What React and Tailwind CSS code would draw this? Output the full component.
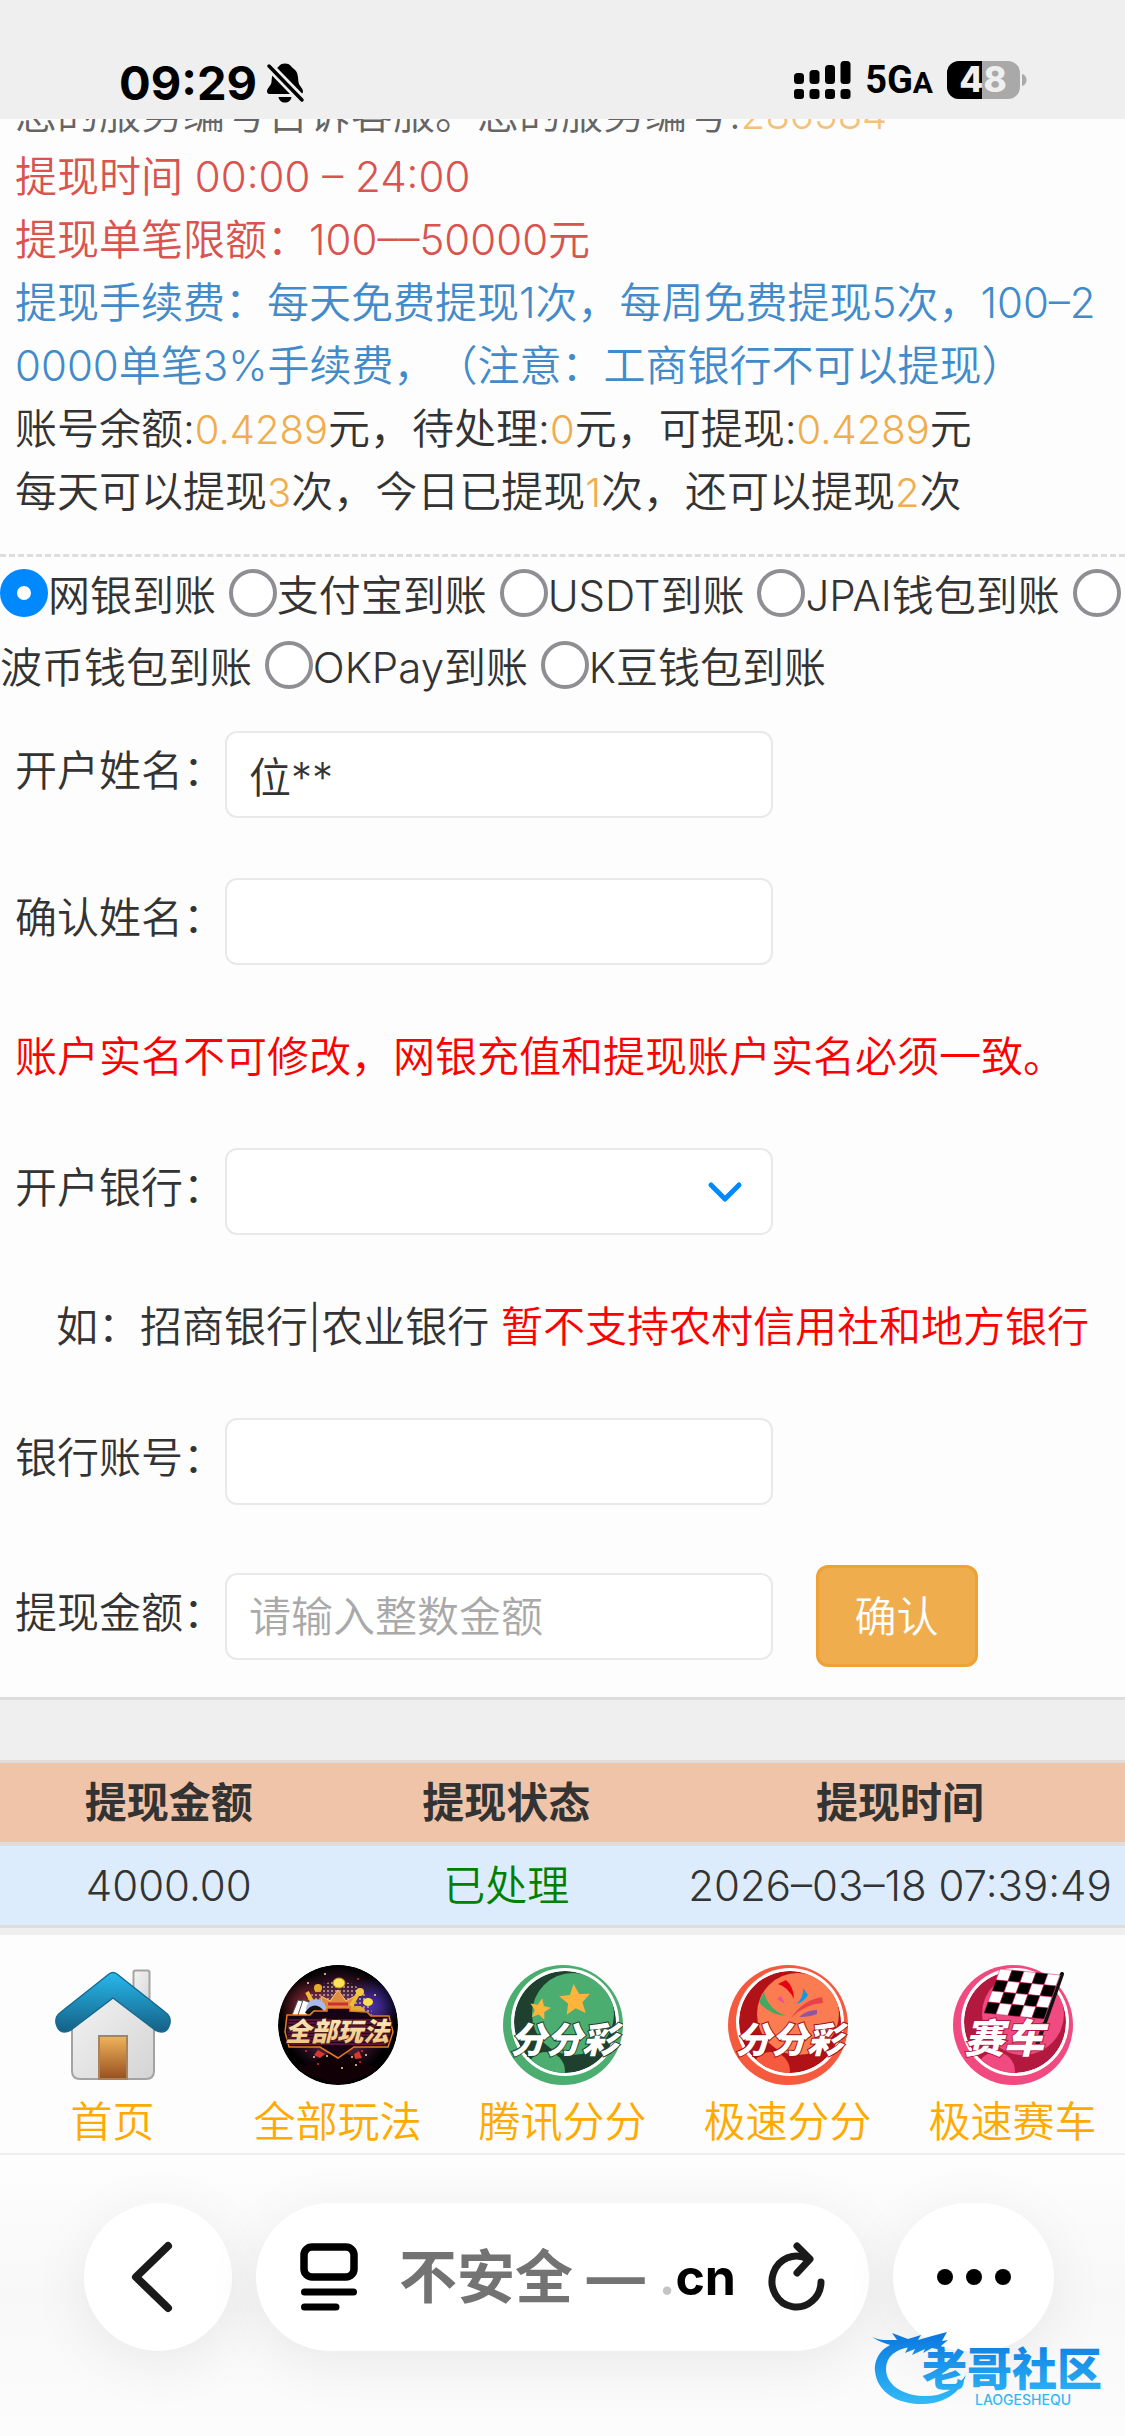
import React from "react";

const labelStyle = "shrink-0 w-[210px] pb-2";
const fieldStyle =
  "h-[87px] w-full rounded-xl border-2 border-[#e9e9e9] bg-white px-[22px] text-[#333] outline-none placeholder:text-[#a9a9a9]";

function BellOff() {
  return (
    <svg width="40" height="42" viewBox="0 0 40 42" role="img" aria-label="静音">
      <path d="M11 7C14 5 14.500 1.500 20 1.500C25.500 1.500 26 5 29 7C33 10 33 15 33.500 20C34 24 38 26 38 29.500C38 31 37 32 35.500 32H4.500C3 32 2 31 2 29.500C2 26 6 24 6.500 20C7 15 7 10 11 7Z" />
      <path d="M13.500 35H26.500C26 38.500 23.500 40.500 20 40.500C16.500 40.500 14 38.500 13.500 35Z" />
      <path d="M3 3L38 39" stroke="#efefef" strokeWidth="9" />
      <path d="M4 4L37 38" stroke="#000" strokeWidth="3.500" strokeLinecap="round" />
    </svg>
  );
}

function Signal() {
  return (
    <svg width="57" height="38" viewBox="0 0 57 38" role="img" aria-label="信号">
      <rect x="0" y="12" width="10" height="11" rx="3.500" />
      <rect x="15.500" y="9" width="10" height="14" rx="3.500" />
      <rect x="31" y="4" width="10" height="19" rx="3.500" />
      <rect x="46.500" y="0" width="10" height="23" rx="3.500" />
      <rect x="0" y="28" width="10" height="10" rx="3" />
      <rect x="15.500" y="28" width="10" height="10" rx="3" />
      <rect x="31" y="28" width="10" height="10" rx="3" />
      <rect x="46.500" y="28" width="10" height="10" rx="3" />
    </svg>
  );
}

function Battery() {
  return (
    <svg width="81" height="38" viewBox="0 0 81 38" role="img" aria-label="电量 48">
      <defs>
        <clipPath id="cell"><rect width="73" height="38" rx="12" /></clipPath>
      </defs>
      <g clipPath="url(#cell)">
        <rect width="73" height="38" fill="#a9a9a9" />
        <rect width="35" height="38" fill="#000" />
      </g>
      <path d="M75 13C81 14 81 24 75 25Z" fill="#a9a9a9" />
      <text x="36" y="31" textAnchor="middle" fontSize="35" fontWeight="800" fill="#efefef" fontFamily="Inter, sans-serif">48</text>
    </svg>
  );
}

function StatusBar() {
  return (
    <header className="flex h-[119px] shrink-0 items-end justify-between bg-[#efefef] pb-[15px] pl-[119px] pr-[97px] text-black">
      <div className="flex items-center gap-2">
        <time className="text-[47px] leading-[42px] font-bold">09:29</time>
        <BellOff />
      </div>
      <div className="flex items-center gap-3.5">
        <Signal />
        <span className="pt-1 font-[Roboto,sans-serif] text-[38px] leading-[42px] font-bold">
          5G<span className="text-[30px]">A</span>
        </span>
        <Battery />
      </div>
    </header>
  );
}

function Num({ children }) {
  return <span className="text-[40px] leading-none text-[#f0ad4e]">{children}</span>;
}

function Notice() {
  return (
    <section className="border-b-[3px] border-dashed border-[#ddd] px-[15px] pb-[31px] break-all">
      <div className="flex h-[26px] flex-col justify-end overflow-hidden opacity-75">
        <p>您的服务编号告诉客服。您的服务编号:<Num>286584</Num></p>
      </div>
      <p className="text-[#d9534f]">提现时间 00:00 – 24:00</p>
      <p className="text-[#d9534f]">提现单笔限额：100––50000元</p>
      <p className="text-[#428bca]">
        提现手续费：每天免费提现1次，每周免费提现5次，100–20000单笔3%手续费，（注意：工商银行不可以提现）
      </p>
      <p>账号余额:<Num>0.4289</Num>元，待处理:<Num>0</Num>元，可提现:<Num>0.4289</Num>元</p>
      <p>每天可以提现<Num>3</Num>次，今日已提现<Num>1</Num>次，还可以提现<Num>2</Num>次</p>
    </section>
  );
}

const channels = ["网银到账", "支付宝到账", "USDT到账", "JPAI钱包到账", "波币钱包到账", "OKPay到账", "K豆钱包到账"];

function Channels() {
  return (
    <div className="break-all pt-[3px] leading-[72px]">
      {channels.map((name, i) => (
        <React.Fragment key={name}>
          <label className="mr-px">
            <input
              type="radio"
              name="channel"
              defaultChecked={i === 0}
              className="size-12 appearance-none rounded-full border-4 border-[#8e8e93] bg-white align-[-6px] checked:border-[17px] checked:border-[#0088ff]"
            />
            {name}
          </label>{" "}
        </React.Fragment>
      ))}
    </div>
  );
}

function Field({ id, label, children, action }) {
  return (
    <div className="flex items-center px-[15px]">
      <label htmlFor={id} className={labelStyle}>{label}</label>
      <div className="relative w-1/2">{children}</div>
      {action}
    </div>
  );
}

function WithdrawForm() {
  return (
    <form className="border-b-[3px] border-[#ddd] pb-[30px]" onSubmit={(e) => e.preventDefault()}>
      <Channels />
      <div className="flex flex-col gap-[60px] pt-[27px]">
        <Field id="holder" label="开户姓名：">
          <input id="holder" type="text" defaultValue="位**" className={fieldStyle} />
        </Field>
        <Field id="confirm" label="确认姓名：">
          <input id="confirm" type="text" className={fieldStyle} />
        </Field>
        <p className="px-[15px] text-[#ff0000]">账户实名不可修改，网银充值和提现账户实名必须一致。</p>
        <Field id="bank" label="开户银行：">
          <select id="bank" defaultValue="" className={fieldStyle + " appearance-none"}>
            <option value=""></option>
            <option>招商银行</option>
            <option>农业银行</option>
          </select>
          <svg className="pointer-events-none absolute right-7 top-8" width="38" height="26" viewBox="0 0 38 26" fill="none" stroke="#0088ff" strokeWidth="5" strokeLinecap="round" strokeLinejoin="round">
            <path d="M4 5L18 19L32 5" />
          </svg>
        </Field>
        <p className="pl-14">
          如：招商银行|农业银行 <span className="text-[#ff0000]">暂不支持农村信用社和地方银行</span>
        </p>
        <Field id="account" label="银行账号：">
          <input id="account" type="text" className={fieldStyle} />
        </Field>
        <Field
          id="amount"
          label="提现金额："
          action={
            <button type="submit" className="ml-[43px] h-[102px] w-[162px] rounded-xl border-[3px] border-[#eea236] bg-[#f0ad4e] text-white">
              确认
            </button>
          }
        >
          <input id="amount" type="text" placeholder="请输入整数金额" className={fieldStyle} />
        </Field>
      </div>
    </form>
  );
}

function Records() {
  const head = "h-[86px] border-t-[3px] border-b-4 border-[#ddd] p-0 font-bold";
  const cell = "h-[82px] border-b-[3px] border-[#ddd] p-0";
  return (
    <div className="bg-[#efefef] pt-[60px] pb-[7px]">
      <table className="w-full table-fixed border-separate border-spacing-0 text-center">
        <colgroup>
          <col className="w-[30%]" />
          <col className="w-[30%]" />
          <col className="w-[40%]" />
        </colgroup>
        <thead className="bg-[#f0c4a8]">
          <tr>
            <th className={head}>提现金额</th>
            <th className={head}>提现状态</th>
            <th className={head}>提现时间</th>
          </tr>
        </thead>
        <tbody className="bg-[#dcecfd]">
          <tr>
            <td className={cell}>4000.00</td>
            <td className={cell + " text-[#008000]"}>已处理</td>
            <td className={cell}>2026–03–18 07:39:49</td>
          </tr>
        </tbody>
      </table>
    </div>
  );
}

const heavy = { fontFamily: "'Noto Sans CJK SC', sans-serif", fontWeight: 900, fontStyle: "italic" };

function HouseIcon() {
  return (
    <svg width="120" height="120" viewBox="0 0 120 120" aria-hidden="true">
      <defs>
        <linearGradient id="roof" x1="0" y1="8" x2="0" y2="68" gradientUnits="userSpaceOnUse">
          <stop offset="0" stopColor="#27b9ec" /><stop offset="1" stopColor="#155f83" />
        </linearGradient>
        <linearGradient id="door" x1="0" y1="0" x2="0" y2="1">
          <stop offset="0" stopColor="#f0b45c" /><stop offset="1" stopColor="#96501f" />
        </linearGradient>
        <linearGradient id="wall" x1="0" y1="0" x2="1" y2="1">
          <stop offset="0" stopColor="#f4f4f4" /><stop offset="1" stopColor="#d4d4d4" />
        </linearGradient>
      </defs>
      <rect x="80.500" y="5.500" width="16" height="42" rx="2" fill="url(#wall)" stroke="#a3a3a3" strokeWidth="2" />
      <path d="M19 56L60 24L101 56V106Q101 114 93 114H27Q19 114 19 106Z" fill="url(#wall)" stroke="#a3a3a3" strokeWidth="2" />
      <rect x="46" y="71" width="28" height="43" fill="url(#door)" stroke="#a8845c" strokeWidth="2" />
      <path d="M8 47L56 9Q60 6 64 9L112 47Q118 51 117 58Q114 71 102 65L60 33L18 65Q6 71 3 58Q2 51 8 47Z" fill="url(#roof)" stroke="#176a90" strokeWidth="1.500" strokeLinejoin="round" />
    </svg>
  );
}

function AllGamesIcon() {
  const dots = [[28, 86], [36, 92], [74, 92], [84, 86], [78, 100], [64, 103], [40, 99], [88, 90], [49, 91], [82, 97], [30, 18], [47, 9], [80, 14], [97, 30]];
  return (
    <svg width="120" height="120" viewBox="0 0 120 120" aria-hidden="true">
      <defs>
        <clipPath id="disc"><circle cx="60" cy="60" r="60" /></clipPath>
        <radialGradient id="glow" cx=".5" cy=".48" r=".5">
          <stop offset="0" stopColor="#d09aa4" /><stop offset=".4" stopColor="#65344f" /><stop offset=".7" stopColor="#2b0f22" /><stop offset=".95" stopColor="#000" />
        </radialGradient>
        <radialGradient id="left"><stop offset="0" stopColor="#a8323a" stopOpacity=".7" /><stop offset="1" stopColor="#a8323a" stopOpacity="0" /></radialGradient>
        <radialGradient id="right"><stop offset="0" stopColor="#4a36c8" stopOpacity=".8" /><stop offset="1" stopColor="#4a36c8" stopOpacity="0" /></radialGradient>
        <linearGradient id="gold" x1="0" y1="0" x2="0" y2="1"><stop offset="0" stopColor="#fff4d2" /><stop offset="1" stopColor="#eebe78" /></linearGradient>
        <pattern id="mesh" width="4" height="4" patternUnits="userSpaceOnUse"><circle cx="2" cy="2" r="1" fill="#f7d5c4" opacity=".7" /></pattern>
        <pattern id="lines" width="4" height="3" patternUnits="userSpaceOnUse"><path d="M0 1H4" stroke="#9b1e75" strokeWidth="1" /></pattern>
      </defs>
      <g clipPath="url(#disc)">
        <circle cx="60" cy="60" r="60" fill="#000" />
        <circle cx="60" cy="58" r="58" fill="url(#glow)" />
        <circle cx="27" cy="40" r="28" fill="url(#left)" />
        <circle cx="95" cy="40" r="28" fill="url(#right)" />
        <circle cx="60" cy="50" r="34" fill="url(#mesh)" />
        <path d="M17 105L60 84L101 105L60 120Z" fill="#110006" />
        <path d="M44 43L43 31L52 36L60 25L68 36L77 31L75 43Z" fill="#e08b42" stroke="#ffc973" />
        <path d="M50 39H70" stroke="#d02d32" strokeWidth="3" />
        <path d="M29 27L37 42M81 27L73 41" stroke="#f2bb36" strokeWidth="4" />
        <ellipse cx="61" cy="18" rx="6" ry="5" fill="#ffe45a" stroke="#c98716" />
        <circle cx="40" cy="23" r="4" fill="#e6ad2c" /><circle cx="82" cy="27" r="4" fill="#f5c93f" />
        <ellipse cx="90" cy="37" rx="5" ry="4" fill="#ffe04c" /><ellipse cx="79" cy="45" rx="8" ry="4" fill="#e6ad2c" />
        <path d="M14 50L20 35L28 37L24 52Z" fill="#fff" stroke="#555" />
        <path d="M20 50L25 35L33 38L29 52Z" fill="#fff" stroke="#555" />
        <circle cx="38" cy="44" r="10" fill="#a9b9e9" /><path d="M29 49Q37 37 45 49" fill="none" stroke="#111" strokeWidth="5" />
        <path d="M9 50L32 50L36 46L49 46V43H72V46L89 47L93 51H111L115 67L110 82H76L60 93L42 82H11L7 67Z" fill="#170311" stroke="#e67b20" strokeWidth="1.500" />
        <path d="M11 53H109L113 67L108 80H12L9 67Z" fill="url(#lines)" />
        <text x="59" y="76" textAnchor="middle" fontSize="26" fill="url(#gold)" stroke="#4d1b13" strokeWidth="2" paintOrder="stroke" style={heavy}>全部玩法</text>
        {dots.map(([x, y], i) => (
          <circle key={i} cx={x} cy={y} r="1" fill={i % 3 ? "#ffd9a8" : "#e52d2d"} />
        ))}
        <path d="M36 90L40 85L47 89L42 93ZM76 89L81 86L84 93L77 94Z" fill="#d8382f" />
      </g>
    </svg>
  );
}

function Ball({ id, main, dark, light, children }) {
  return (
    <svg width="120" height="120" viewBox="0 0 120 120" aria-hidden="true">
      <defs><clipPath id={id}><circle cx="62" cy="57" r="51" /></clipPath></defs>
      <circle cx="60" cy="60" r="60" fill={main} />
      <circle cx="62" cy="57" r="54" fill="#fff" />
      <g clipPath={`url(#${id})`}>
        <circle cx="62" cy="57" r="51" fill={dark} />
        <circle cx="70" cy="49" r="41" fill={light} />
        <circle cx="43" cy="106" r="19" fill={main} />
      </g>
      {children}
    </svg>
  );
}

function BallText({ size, x, edge, children }) {
  return (
    <text x={x} y="88" textAnchor="middle" fontSize={size} fill="#fff" stroke={edge} strokeWidth="2" paintOrder="stroke" style={heavy}>
      {children}
    </text>
  );
}

function GreenIcon() {
  const star = "M0 -16L4.700 -5.500L15.500 -5L7.200 3L9.500 14L0 8.200L-9.500 14L-7.200 3L-15.500 -5L-4.700 -5.500Z";
  return (
    <Ball id="ballGreen" main="#4cad70" dark="#1f402e" light="#4cad70">
      <path d={star} fill="#ffb43c" transform="translate(37 44) rotate(12) scale(.68)" />
      <path d={star} fill="#ffb43c" transform="translate(72 35) rotate(-5)" />
      <BallText size="36" x="61" edge="#1f402e">分分彩</BallText>
    </Ball>
  );
}

function RedIcon() {
  return (
    <Ball id="ballRed" main="#f55a3f" dark="#b11218" light="#fb7c50">
      <path d="M50 19L58 15Q66 22 66 34Q60 22 50 19Z" fill="#e60012" />
      <path d="M75 23L80 30Q76 37 68 39Q76 33 75 23Z" fill="#009fe8" />
      <path d="M49 34L53 31L57 39Z" fill="#e85298" />
      <path d="M36 27Q40 44 58 51Q40 49 31 37Z" fill="#45a862" />
      <path d="M63 53Q75 35 94 32L95 38Q77 39 63 53Z" fill="#e8434a" />
      <path d="M71 52Q79 45 89 45L89 49Q82 52 71 52Z" fill="#8d55a2" />
      <BallText size="36" x="61" edge="#9c1015">分分彩</BallText>
    </Ball>
  );
}

function RaceIcon() {
  const squares = [];
  for (let r = 0; r < 4; r++)
    for (let c = 0; c < 5; c++) squares.push([r, c]);
  return (
    <Ball id="ballPink" main="#f04a80" dark="#b3183f" light="#f04a80">
      <path d="M109 9L84 80" stroke="#111" strokeWidth="4" strokeLinecap="round" />
      <path d="M107 10L90 57" stroke="#888" strokeWidth="1" />
      {squares.map(([r, c]) => {
        const x = 47 + c * 12 - r * 4;
        const y = 4 + c * 1.2 + r * 11;
        return (
          <path key={`${r}-${c}`} d={`M${x} ${y}l12 1.200l-4 11l-12 -1.200Z`} fill={(r + c) % 2 ? "#000" : "#fff"} stroke="#c71a50" strokeWidth=".500" />
        );
      })}
      <BallText size="40" x="51" edge="#b3183f">赛车</BallText>
    </Ball>
  );
}

const links = [
  ["首页", HouseIcon],
  ["全部玩法", AllGamesIcon],
  ["腾讯分分", GreenIcon],
  ["极速分分", RedIcon],
  ["极速赛车", RaceIcon],
];

function BottomNav() {
  return (
    <nav className="grid grid-cols-5 border-b-2 border-[#eee] pt-[30px]">
      {links.map(([name, Icon]) => (
        <a key={name} href="#" className="flex flex-col items-center gap-[5px] text-[#ffaa00]">
          <Icon />
          {name}
        </a>
      ))}
    </nav>
  );
}

function Watermark() {
  return (
    <svg className="absolute right-3 bottom-6" width="244" height="88" viewBox="0 0 244 88" role="img" aria-label="老哥社区">
      <defs>
        <linearGradient id="sea" x1="0" y1="10" x2="0" y2="82" gradientUnits="userSpaceOnUse">
          <stop offset="0" stopColor="#0a78e0" /><stop offset="1" stopColor="#33bdf8" />
        </linearGradient>
      </defs>
      <g fill="url(#sea)">
        <path d="M32 17C14 21 5 33 6 47C8 69 30 81 55 80C77 79 92 68 97 51C85 67 70 73 54 72C32 71 17 60 17 45C17 33 26 25 42 23Z" />
        <path d="M3 13C11 17 18 16 28 16L23 9L39 15L52 11L49 16L63 12L78 8L73 17L79 16L72 22L77 27L63 24L54 29L56 25L43 31L46 25L36 29L39 23L25 22Q12 19 3 13Z" />
        <text x="53" y="62" fontSize="45" style={{ fontFamily: "'Noto Sans CJK SC', sans-serif", fontWeight: 900 }}>老哥社区</text>
        <text x="106" y="81" fontSize="14" fontWeight="500" fontFamily="Inter, sans-serif">LAOGESHEQU</text>
      </g>
    </svg>
  );
}

function BrowserBar() {
  const pill = "flex h-[148px] items-center rounded-full bg-white shadow-[0_12px_60px_rgba(0,0,0,0.07)]";
  return (
    <footer className="relative flex grow items-start gap-6 bg-linear-to-b from-[#fdfdfd] via-[#f8f8f8] to-[#fcfcfc] pt-12 pr-[71px] pb-[84px] pl-[84px]">
      <button type="button" aria-label="返回" className={pill + " w-[148px] shrink-0 justify-center pr-2.5"}>
        <svg width="56" height="80" viewBox="0 0 56 80" fill="none" stroke="#1a1a1a" strokeWidth="8" strokeLinecap="round" strokeLinejoin="round">
          <path d="M43 9L11 40L43 71" />
        </svg>
      </button>
      <div className={pill + " grow justify-between px-11"}>
        <button type="button" aria-label="页面菜单">
          <svg width="58" height="68" viewBox="0 0 58 68">
            <rect x="4" y="4" width="50" height="30" rx="8" fill="none" stroke="#000" strokeWidth="7.500" />
            <path d="M4.500 49H53.500M4.500 64H36" stroke="#000" strokeWidth="7" strokeLinecap="round" />
          </svg>
        </button>
        <div className="flex items-center gap-3.5 pl-2.5 font-bold whitespace-nowrap">
          <span className="text-[58px] leading-[80px] text-[#737373]">不安全 —</span>
          <span className="text-[50px] leading-[80px] text-black"><span className="text-[#c4c4c4]">.</span>cn</span>
        </div>
        <button type="button" aria-label="刷新">
          <svg width="58" height="70" viewBox="0 0 58 70" fill="none" stroke="#1a1a1a" strokeWidth="7" strokeLinecap="round" strokeLinejoin="round">
            <path d="M54 40A24.500 25.500 0 1 1 41 17" />
            <path d="M30 4L43 17L30 31" />
          </svg>
        </button>
      </div>
      <button type="button" aria-label="更多" className={pill + " w-[161px] shrink-0 justify-center gap-[13px]"}>
        <span className="size-4 rounded-full bg-black" />
        <span className="size-4 rounded-full bg-black" />
        <span className="size-4 rounded-full bg-black" />
      </button>
      <Watermark />
    </footer>
  );
}

export default function App() {
  return (
    <div className="flex min-h-screen flex-col bg-[#fdfdfd] font-[Inter,'Noto_Sans_CJK_SC',sans-serif] text-[42px] leading-[63px] font-[350] text-[#333] [text-spacing-trim:space-all]">
      <StatusBar />
      <main>
        <Notice />
        <WithdrawForm />
        <Records />
        <BottomNav />
      </main>
      <BrowserBar />
    </div>
  );
}
